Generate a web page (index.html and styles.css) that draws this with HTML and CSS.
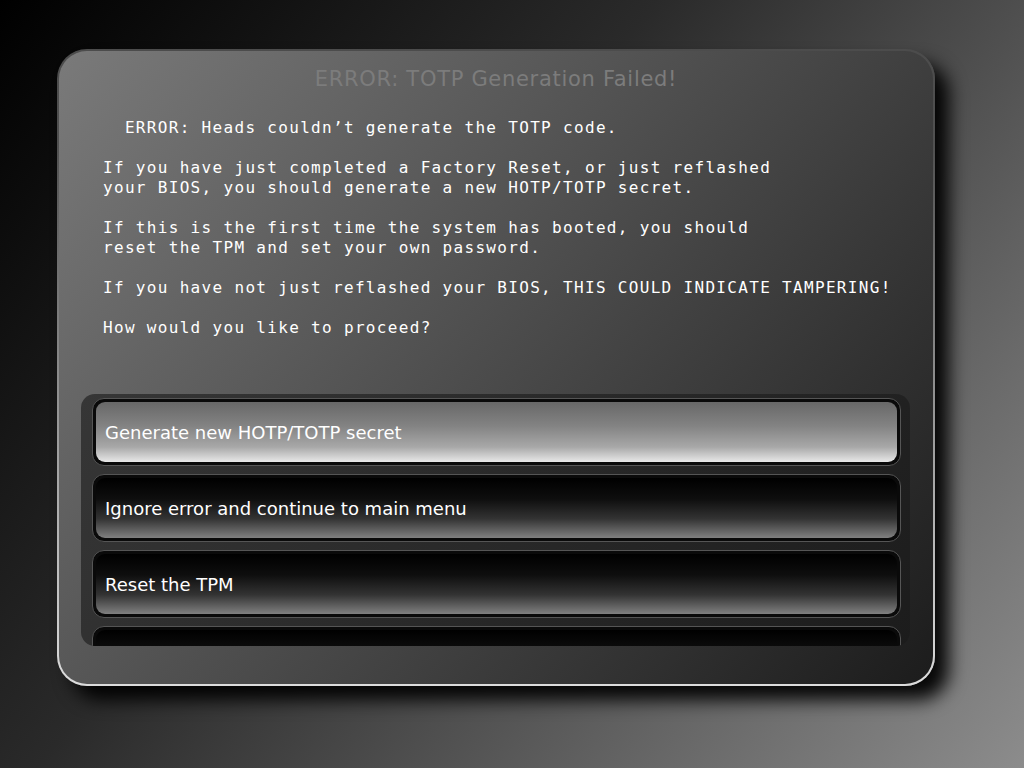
FILE: index.html
```html
<!DOCTYPE html>
<html lang="en">
<head>
<meta charset="utf-8">
<title>ERROR: TOTP Generation Failed!</title>
<link rel="stylesheet" href="styles.css">
</head>
<body>
<div class="screen">
  <div class="dialog">
    <div class="title">ERROR: TOTP Generation Failed!</div>
    <div class="message">  ERROR: Heads couldn’t generate the TOTP code.

If you have just completed a Factory Reset, or just reflashed
your BIOS, you should generate a new HOTP/TOTP secret.

If this is the first time the system has booted, you should
reset the TPM and set your own password.

If you have not just reflashed your BIOS, THIS COULD INDICATE TAMPERING!

How would you like to proceed?</div>
    <div class="menu">
      <div class="item selected"><div class="fill">Generate new HOTP/TOTP secret</div></div>
      <div class="item"><div class="fill">Ignore error and continue to main menu</div></div>
      <div class="item"><div class="fill">Reset the TPM</div></div>
      <div class="item"><div class="fill"></div></div>
    </div>
  </div>
</div>
</body>
</html>
```

FILE: styles.css
```css
html, body {
  margin: 0;
  padding: 0;
  width: 1024px;
  height: 768px;
  overflow: hidden;
}

body {
  background: linear-gradient(129deg, #000000 0%, #2a2a2a 40%, #8c8c8c 100%);
}

.screen {
  width: 1024px;
  height: 768px;
  padding: 49px 0 0 57px;
  box-sizing: border-box;
}

.dialog {
  width: 878px;
  height: 637px;
  box-sizing: border-box;
  border: 2px solid transparent;
  border-radius: 30px;
  background:
    linear-gradient(129deg, #7a7a7a 0%, #1c1c1c 100%) padding-box,
    linear-gradient(to bottom, #4c4c4c 0%, #505050 15%, #9a9a9a 60%, #dcdcdc 100%) border-box;
  box-shadow: 14px 14px 18px rgba(0, 0, 0, 0.95);
}

.title {
  padding-top: 13px;
  height: 30px;
  line-height: 30px;
  text-align: center;
  font-family: "DejaVu Sans", "Liberation Sans", sans-serif;
  font-size: 21px;
  letter-spacing: 0.7px;
  color: #7c7c7c;
}

.message {
  margin-top: 24px;
  padding-left: 44px;
  white-space: pre;
  font-family: "DejaVu Sans Mono", "Liberation Mono", monospace;
  font-size: 16px;
  letter-spacing: 1.32px;
  line-height: 20px;
  color: #ffffff;
}

.menu {
  margin: 56px 0 0 22px;
  width: 829px;
  height: 252px;
  box-sizing: border-box;
  padding: 4px 9px 0 11px;
  border-radius: 14px;
  background: linear-gradient(129deg, #363636 0%, #1c1c1c 100%);
  overflow: hidden;
  display: flex;
  flex-direction: column;
  gap: 8px;
}

.item {
  flex: 0 0 auto;
  height: 68px;
  box-sizing: border-box;
  border: 1px solid #555555;
  border-radius: 12px;
  padding: 3px;
  background: #0a0a0a;
}

.fill {
  height: 60px;
  border-radius: 9px;
  padding-left: 9px;
  display: flex;
  align-items: center;
  font-family: "DejaVu Sans", "Liberation Sans", sans-serif;
  font-size: 18px;
  color: #ffffff;
  background: linear-gradient(to bottom, #000000 0%, #0e0e0e 35%, #333333 68%, #808080 100%);
}

.item.selected .fill {
  background: linear-gradient(to bottom, #686868 0%, #838383 40%, #a8a8a8 75%, #e8e8e8 100%);
}
```
